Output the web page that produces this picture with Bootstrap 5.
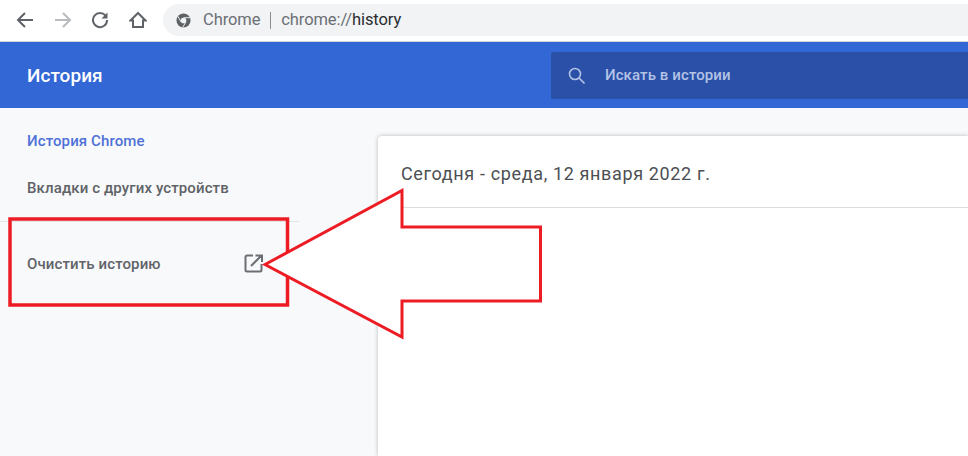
<!DOCTYPE html>
<html lang="ru"><head><meta charset="utf-8"><title>История</title>
<link href="https://cdn.jsdelivr.net/npm/bootstrap@5.3.0/dist/css/bootstrap.min.css" rel="stylesheet">
<style>
html,body{height:456px;overflow:hidden}
body{font-family:Roboto,"Noto Sans",sans-serif;background:#f8f9fa;color:#5f6368;position:relative;width:968px}
.tool-bar{height:42px;background:#fff;border-bottom:1px solid #d0d3d8;padding:4px 0 5px 16px}
.tool-btn{width:18px;height:18px;flex:none}
.tool-btns{gap:19.5px;width:147px}
.omni{background:#f1f3f4;border-radius:16px 0 0 16px;height:32px;padding-left:13px;font-size:16.5px;letter-spacing:-.1px}
.omni-sep{width:1px;height:17px;background:#8a8d91;margin:0 10px}
.omni-dim{color:#6b6f74}.omni-dark{color:#2a2c30}
.hist-head{height:66px;background:#3367d6;padding-left:27px}
.hist-title{width:524px;color:#fff;font-size:19px;font-weight:500;flex:none;padding-top:3px;letter-spacing:.05px}
.hist-search{background:#2a50a7;height:47px;border-radius:2px 0 0 2px;color:#b4c3e6;font-size:15px;font-weight:500;padding-left:17px;letter-spacing:.1px}
.hist-search svg{margin-right:20px}
.hist-main{height:348px}
.hist-side{width:378px;flex:none;font-size:15px;font-weight:500;padding-top:24px;letter-spacing:.12px}
.side-link{padding-left:27px;line-height:18px}
.side-active{color:#4e71d8;margin-bottom:29px}
.side-gap{width:299px;height:1px;background:#e2e3e5;margin-top:24px;margin-bottom:32px}
.side-clear{width:263px;gap:0}
.hist-card{background:#fff;margin-top:28px;border-radius:4px 0 0 0;box-shadow:0 0 4px rgba(60,64,67,.35)}
.card-head{height:72px;border-bottom:1px solid #dadce0;padding:3px 0 0 23px;font-size:18px;color:#4c4f53;letter-spacing:.64px}
.overlay-mark{position:absolute;left:0;top:0;pointer-events:none}
</style></head><body>
<div class="tool-bar d-flex align-items-center">
<div class="tool-btns d-flex align-items-center">
<svg class="tool-btn" viewBox="0 0 18 18" fill="none" stroke="#5f6368" stroke-width="2"><path d="M17 9H2M9 2 2 9l7 7"/></svg>
<svg class="tool-btn" viewBox="0 0 18 18" fill="none" stroke="#b9bbbe" stroke-width="2"><path d="M1 9h15M9 2l7 7-7 7"/></svg>
<svg class="tool-btn" viewBox="0 0 18 18" fill="none" stroke="#5f6368" stroke-width="2"><path d="M15 5.500A7 7 0 1 0 16 9"/><path d="M16.500 1.500v6h-6z" fill="#5f6368" stroke="none"/></svg>
<svg class="tool-btn" viewBox="0 0 18 18" fill="none" stroke="#5f6368" stroke-width="2"><path d="M9 2 1.500 9.500H4V16h10V9.500h2.500z"/></svg>
</div>
<div class="omni flex-grow-1 d-flex align-items-center">
<svg width="15" height="15" viewBox="0 0 16 16" class="me-2"><circle cx="8" cy="8" r="7.500" fill="#5f6368"/><circle cx="8" cy="8" r="3" fill="#f1f3f4"/><path d="M8 5h7M5.400 9.500 2 3.500M10.600 9.500 7 15.500" stroke="#f1f3f4" stroke-width="1"/></svg>
<span class="omni-dim ms-1">Chrome</span><span class="omni-sep"></span><span class="omni-dim">chrome://</span><span class="omni-dark">history</span>
</div></div>
<div class="hist-head d-flex align-items-center">
<div class="hist-title">История</div>
<div class="hist-search flex-grow-1 d-flex align-items-center">
<svg width="17" height="17" viewBox="0 0 17 17" fill="none" stroke="#b4c3e6" stroke-width="1.600"><circle cx="7" cy="7" r="5.500"/><path d="m11 11 5.500 5.500"/></svg>
<span>Искать в истории</span></div></div>
<div class="hist-main d-flex">
<nav class="hist-side">
<div class="side-link side-active">История Chrome</div>
<div class="side-link">Вкладки с других устройств</div>
<div class="side-gap"></div>
<div class="side-link side-clear d-flex justify-content-between align-items-center">
<span>Очистить историю</span>
<svg width="19" height="19" viewBox="0 0 19 19" fill="none" stroke="#6b6e72" stroke-width="2"><path d="M9 1.500H3A1.500 1.500 0 0 0 1.500 3v13A1.500 1.500 0 0 0 3 17.500h13a1.500 1.500 0 0 0 1.500-1.500v-6M7 12 17 2M11.500 1.500h6.500V8"/></svg>
</div></nav>
<main class="hist-card flex-grow-1"><div class="card-head d-flex align-items-center">Сегодня - среда, 12 января 2022 г.</div></main>
</div>
<svg class="overlay-mark" width="968" height="456" fill="none" stroke="#ed1c24">
<rect x="10" y="219" width="277.500" height="86" stroke-width="3.500"/>
<path d="M265 264.500 402 190.500V227H540.500V301H402V337Z" fill="#fff" stroke-width="3"/>
</svg>
</body></html>
